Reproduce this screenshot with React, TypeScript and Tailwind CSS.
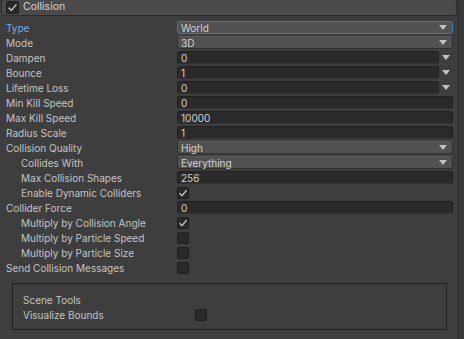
import React from "react";

type Row =
  | { label: string; kind: "drop"; value: string; indent?: boolean; focus?: boolean }
  | { label: string; kind: "text"; value: string; indent?: boolean }
  | { label: string; kind: "curve"; value: string; indent?: boolean }
  | { label: string; kind: "check"; checked: boolean; indent?: boolean };

const rows: Row[] = [
  { label: "Type", kind: "drop", value: "World", focus: true },
  { label: "Mode", kind: "drop", value: "3D" },
  { label: "Dampen", kind: "curve", value: "0" },
  { label: "Bounce", kind: "curve", value: "1" },
  { label: "Lifetime Loss", kind: "curve", value: "0" },
  { label: "Min Kill Speed", kind: "text", value: "0" },
  { label: "Max Kill Speed", kind: "text", value: "10000" },
  { label: "Radius Scale", kind: "text", value: "1" },
  { label: "Collision Quality", kind: "drop", value: "High" },
  { label: "Collides With", kind: "drop", value: "Everything", indent: true },
  { label: "Max Collision Shapes", kind: "text", value: "256", indent: true },
  { label: "Enable Dynamic Colliders", kind: "check", checked: true, indent: true },
  { label: "Collider Force", kind: "text", value: "0" },
  { label: "Multiply by Collision Angle", kind: "check", checked: true, indent: true },
  { label: "Multiply by Particle Speed", kind: "check", checked: false, indent: true },
  { label: "Multiply by Particle Size", kind: "check", checked: false, indent: true },
  { label: "Send Collision Messages", kind: "check", checked: false },
];

const Arrow = () => (
  <svg width="8" height="5" viewBox="0 0 8 5" className="shrink-0">
    <path d="M0 0 H8 L4 5 Z" fill="#c2c2c2" />
  </svg>
);

const Check = ({ checked }: { checked: boolean }) => (
  <div className="w-[12px] h-[12px] rounded-[2px] bg-[#2a2a2a] border border-[#1e1e1e] flex items-center justify-center">
    {checked && (
      <svg width="10" height="10" viewBox="0 0 10 10">
        <path d="M1.5 5.2 L4 7.6 L8.6 2.2" stroke="#d0d0d0" strokeWidth="1.3" fill="none" />
      </svg>
    )}
  </div>
);

function Field({ row }: { row: Row }) {
  if (row.kind === "check") {
    return (
      <div className="flex items-center h-full">
        <Check checked={row.checked} />
      </div>
    );
  }
  if (row.kind === "drop") {
    return (
      <div
        className={`h-[13px] mt-px flex items-center justify-between pl-[3px] pr-[5px] rounded-[3px] bg-[#515151] border ${
          row.focus ? "border-[#3a79bb]" : "border-[#303030] border-t-[#585858]"
        }`}
      >
        <span className="text-[#d2d2d2]">{row.value}</span>
        <Arrow />
      </div>
    );
  }
  const box = (
    <div className="flex-1 h-[13px] mt-px flex items-center pl-[3px] rounded-[3px] bg-[#2a2a2a] border border-[#212121] border-b-[#333333]">
      <span className="text-[#d2d2d2]">{row.value}</span>
    </div>
  );
  if (row.kind === "curve") {
    return (
      <div className="flex items-start">
        {box}
        <div className="w-[14px] h-[15px] flex items-center justify-center">
          <Arrow />
        </div>
      </div>
    );
  }
  return <div className="flex">{box}</div>;
}

export default function App() {
  return (
    <div
      className="w-[464px] h-[339px] bg-[#3e3e3e] flex overflow-hidden text-[10px] leading-none"
      style={{ fontFamily: "Inter, 'Liberation Sans', sans-serif" }}
    >
      <div className="flex-1 flex flex-col">
        {/* header */}
        <div className="ml-px w-[456px] h-[17px] -mt-px flex items-center gap-[4px] pl-[4px] rounded-[3px] bg-[#4b4b4b] border border-[#2a2a2a]">
          <div className="w-[13px] h-[13px] rounded-[2px] bg-[#2a2a2a] border border-[#1e1e1e] flex items-center justify-center">
            <svg width="11" height="11" viewBox="0 0 10 10">
              <path d="M1.5 5.2 L4 7.6 L8.6 2.2" stroke="#d6d6d6" strokeWidth="1.2" fill="none" />
            </svg>
          </div>
          <span className="text-[#d4d4d4] text-[10.5px]">Collision</span>
        </div>

        <div className="mt-[4px] flex flex-col">
          {rows.map((row) => (
            <div key={row.label} className="h-[15px] flex pl-[6px] pr-[5px]">
              <div
                className={`w-[171px] h-full flex items-center pt-px ${row.indent ? "pl-[15px]" : ""} ${
                  row.kind === "drop" && row.focus ? "text-[#7aaae6]" : "text-[#c4c4c4]"
                }`}
              >
                {row.label}
              </div>
              <div className="flex-1 h-full">
                <Field row={row} />
              </div>
            </div>
          ))}
        </div>

        {/* scene tools */}
        <div className="mt-[8px] ml-[12px] w-[435px] h-[47px] border border-[#1f1f1f] pl-[10px] pt-[8px] flex flex-col">
          <div className="h-[15px] flex items-center text-[#c4c4c4]">Scene Tools</div>
          <div className="h-[15px] flex items-center text-[#c4c4c4]">
            <span className="w-[172px]">Visualize Bounds</span>
            <Check checked={false} />
          </div>
        </div>
      </div>
      {/* scrollbar strip */}
      <div className="w-[6px] h-full border-l border-[#2b2b2b] bg-[#393939]" />
    </div>
  );
}
